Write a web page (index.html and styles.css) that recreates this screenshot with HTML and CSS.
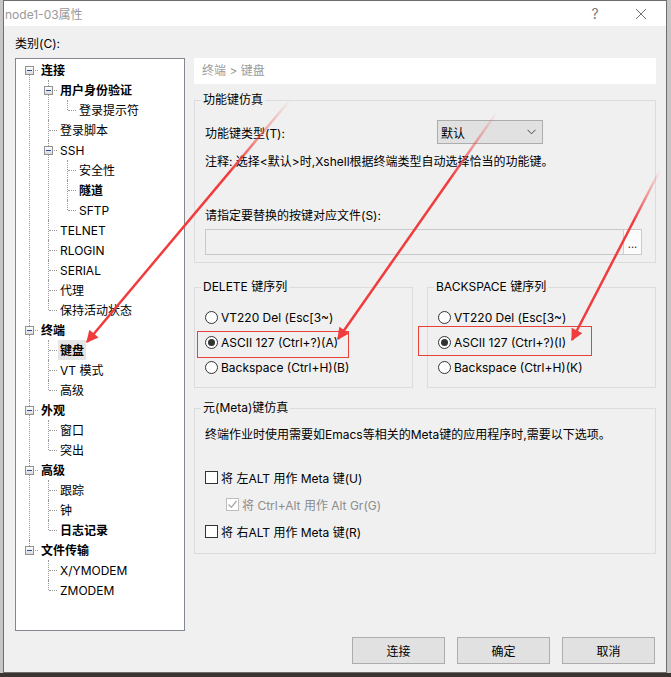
FILE: index.html
```html
<!DOCTYPE html>
<html lang="zh-CN">
<head>
    <meta charset="UTF-8">
    <meta name="viewport" content="width=device-width, initial-scale=1.0">
    <title>node1-03属性</title>
    <link rel="stylesheet" href="styles.css">
</head>
<body>
    <div class="window">
        <div class="titlebar">
            <span class="title">node1-03属性</span>
            <span class="tb-help">?</span>
            <span class="tb-close">
                <svg width="12" height="12" viewBox="0 0 12 12"><path d="M1 1 L11 11 M11 1 L1 11" stroke="#6f6f6f" stroke-width="1" fill="none"/></svg>
            </span>
        </div>

        <div class="content">
            <div class="cat-label">类别(C):</div>

            <!-- дерево категорий -->
            <div class="tree">
                <ul class="root">
                    <li class="first"><span class="exp"></span><span class="node b">连接</span>
                        <ul>
                            <li><span class="exp"></span><span class="node b">用户身份验证</span>
                                <ul>
                                    <li class="last"><span class="node">登录提示符</span></li>
                                </ul>
                            </li>
                            <li><span class="node">登录脚本</span></li>
                            <li><span class="exp"></span><span class="node">SSH</span>
                                <ul>
                                    <li><span class="node">安全性</span></li>
                                    <li><span class="node b">隧道</span></li>
                                    <li class="last"><span class="node">SFTP</span></li>
                                </ul>
                            </li>
                            <li><span class="node">TELNET</span></li>
                            <li><span class="node">RLOGIN</span></li>
                            <li><span class="node">SERIAL</span></li>
                            <li><span class="node">代理</span></li>
                            <li class="last"><span class="node">保持活动状态</span></li>
                        </ul>
                    </li>
                    <li><span class="exp"></span><span class="node b">终端</span>
                        <ul>
                            <li><span class="node b selected">键盘</span></li>
                            <li><span class="node">VT 模式</span></li>
                            <li class="last"><span class="node">高级</span></li>
                        </ul>
                    </li>
                    <li><span class="exp"></span><span class="node b">外观</span>
                        <ul>
                            <li><span class="node">窗口</span></li>
                            <li class="last"><span class="node">突出</span></li>
                        </ul>
                    </li>
                    <li><span class="exp"></span><span class="node b">高级</span>
                        <ul>
                            <li><span class="node">跟踪</span></li>
                            <li><span class="node">钟</span></li>
                            <li class="last"><span class="node b">日志记录</span></li>
                        </ul>
                    </li>
                    <li class="last"><span class="exp"></span><span class="node b">文件传输</span>
                        <ul>
                            <li><span class="node">X/YMODEM</span></li>
                            <li class="last"><span class="node">ZMODEM</span></li>
                        </ul>
                    </li>
                </ul>
            </div>

            <!-- правая панель -->
            <div class="panel">
                <div class="crumb">终端 &gt; 键盘</div>

                <fieldset class="group">
                    <legend>功能键仿真</legend>
                    <div class="group-body func-body">
                        <div class="field-row">
                            <span class="type-label">功能键类型(T):</span>
                            <div class="select">
                                <span>默认</span>
                                <svg width="9" height="6" viewBox="0 0 9 6"><path d="M0.5 0.8 L4.5 4.8 L8.5 0.8" stroke="#444" stroke-width="1" fill="none"/></svg>
                            </div>
                        </div>
                        <p class="note">注释: 选择&lt;默认&gt;时,Xshell根据终端类型自动选择恰当的功能键。</p>
                        <p class="file-label">请指定要替换的按键对应文件(S):</p>
                        <div class="file-input"><span class="browse">...</span></div>
                    </div>
                </fieldset>

                <div class="seq-row">
                    <fieldset class="group">
                        <legend>DELETE 键序列</legend>
                        <div class="group-body seq-body">
                            <div class="radio-row"><span class="radio"></span>VT220 Del (Esc[3~)</div>
                            <div class="radio-row"><span class="radio checked"></span>ASCII 127 (Ctrl+?)(A)</div>
                            <div class="radio-row"><span class="radio"></span>Backspace (Ctrl+H)(B)</div>
                        </div>
                    </fieldset>
                    <fieldset class="group">
                        <legend>BACKSPACE 键序列</legend>
                        <div class="group-body seq-body">
                            <div class="radio-row"><span class="radio"></span>VT220 Del (Esc[3~)</div>
                            <div class="radio-row"><span class="radio checked"></span>ASCII 127 (Ctrl+?)(I)</div>
                            <div class="radio-row"><span class="radio"></span>Backspace (Ctrl+H)(K)</div>
                        </div>
                    </fieldset>
                </div>

                <fieldset class="group">
                    <legend>元(Meta)键仿真</legend>
                    <div class="group-body meta-body">
                        <p class="meta-note">终端作业时使用需要如Emacs等相关的Meta键的应用程序时,需要以下选项。</p>
                        <div class="check-row first-check"><span class="check"></span>将 左ALT 用作 Meta 键(U)</div>
                        <div class="check-row sub disabled">
                            <span class="check">
                                <svg width="11" height="11" viewBox="0 0 11 11"><path d="M1.5 5.5 L4.3 8.3 L9.5 2" stroke="#a8a8a8" stroke-width="1.3" fill="none"/></svg>
                            </span>将 Ctrl+Alt 用作 Alt Gr(G)
                        </div>
                        <div class="check-row"><span class="check"></span>将 右ALT 用作 Meta 键(R)</div>
                    </div>
                </fieldset>
            </div>

            <div class="actions">
                <button>连接</button>
                <button>确定</button>
                <button>取消</button>
            </div>
        </div>
    </div>

    <!-- пометки поверх скриншота -->
    <svg class="marks" width="671" height="677" viewBox="0 0 671 677">
        <defs>
            <marker id="head" viewBox="0 0 10 10" refX="9" refY="5" markerWidth="15" markerHeight="12" markerUnits="userSpaceOnUse" orient="auto">
                <path d="M0 0 L10 5 L0 10 z" fill="#f03c3c"/>
            </marker>
            <linearGradient id="fade1" gradientUnits="userSpaceOnUse" x1="290" y1="100" x2="87" y2="342">
                <stop offset="0" stop-color="#f03c3c" stop-opacity="0"/>
                <stop offset="0.3" stop-color="#f03c3c" stop-opacity="1"/>
            </linearGradient>
            <linearGradient id="fade2" gradientUnits="userSpaceOnUse" x1="497" y1="112" x2="338" y2="339">
                <stop offset="0" stop-color="#f03c3c" stop-opacity="0"/>
                <stop offset="0.3" stop-color="#f03c3c" stop-opacity="1"/>
            </linearGradient>
            <linearGradient id="fade3" gradientUnits="userSpaceOnUse" x1="660" y1="170" x2="572" y2="340">
                <stop offset="0" stop-color="#f03c3c" stop-opacity="0"/>
                <stop offset="0.3" stop-color="#f03c3c" stop-opacity="1"/>
            </linearGradient>
        </defs>
        <line x1="290" y1="100" x2="87" y2="342" stroke="url(#fade1)" stroke-width="2.5" marker-end="url(#head)"/>
        <line x1="497" y1="112" x2="338" y2="339" stroke="url(#fade2)" stroke-width="2.5" marker-end="url(#head)"/>
        <line x1="660" y1="170" x2="572" y2="340" stroke="url(#fade3)" stroke-width="2.5" marker-end="url(#head)"/>
        <rect x="197.5" y="331.5" width="151" height="26" fill="none" stroke="#e8403a"/>
        <rect x="418.5" y="326.5" width="173" height="29" fill="none" stroke="#e8403a"/>
    </svg>
</body>
</html>
```

FILE: styles.css
```css
html, body {
    margin: 0;
    height: 677px;
    overflow: hidden;
}

body {
    position: relative;
    font-family: Inter, "Noto Sans CJK SC", sans-serif;
    font-size: 12px;
    color: #000;
    background: linear-gradient(to bottom, #c6c6c6 673px, #3b3430 673px);
}

.window {
    box-sizing: border-box;
    width: 664px;
    height: 673px;
    margin-left: 3px;
    border: 1px solid #6e6e6e;
    background-color: #f0f0f0;
    display: flex;
    flex-direction: column;
}

/* заголовок окна */
.titlebar {
    height: 25px;
    background-color: #fff;
    display: flex;
    align-items: center;
    padding-left: 1px;
    color: #999;
}

.title {
    flex: 1;
    font-size: 12px;
}

.tb-help {
    width: 20px;
    text-align: center;
    font-size: 14px;
    color: #7a7a7a;
    margin-right: 26px;
}

.tb-close {
    width: 20px;
    display: flex;
    justify-content: center;
    margin-right: 15px;
}

.content {
    flex: 1;
    display: grid;
    grid-template-columns: 170px 1fr;
    grid-template-rows: 16px 1fr 27px;
    column-gap: 9px;
    row-gap: 6px;
    padding: 10px 10px 8px 11px;
    min-height: 0;
}

.cat-label {
    line-height: 16px;
    grid-column: 1 / 3;
}

/* дерево */
.tree {
    border: 1px solid #828790;
    background-color: #fff;
    padding-top: 1px;
    overflow: hidden;
}

.tree ul {
    list-style: none;
    margin: 0;
    padding: 0;
}

.root {
    margin-left: 13px !important;
}

.tree ul ul {
    margin-left: 9px;
}

.tree li {
    position: relative;
    padding-left: 10px;
    line-height: 20px;
}

.tree li::before {
    content: "";
    position: absolute;
    left: 0;
    top: 0;
    bottom: 0;
    border-left: 1px dotted #9a9a9a;
}

.tree li.last::before {
    bottom: auto;
    height: 10px;
}

.root > li.first::before {
    top: 10px;
}

.tree li::after {
    content: "";
    position: absolute;
    left: 1px;
    top: 10px;
    width: 8px;
    border-top: 1px dotted #9a9a9a;
}

.node {
    display: inline-block;
    vertical-align: top;
    height: 19px;
    line-height: 19px;
    padding: 1px 2px 0;
    white-space: nowrap;
}

.b {
    font-weight: bold;
}

.selected {
    background-color: #e5e5e5;
}

.exp {
    position: absolute;
    z-index: 1;
    left: -4px;
    top: 6px;
    width: 7px;
    height: 7px;
    border: 1px solid #919191;
    background: linear-gradient(#ffffff, #dadada);
}

.exp::after {
    content: "";
    position: absolute;
    left: 1px;
    top: 3px;
    width: 5px;
    height: 1px;
    background-color: #2a4b9b;
}

/* правая панель */
.panel {
    display: flex;
    flex-direction: column;
}

.crumb {
    height: 26px;
    line-height: 26px;
    background-color: #fff;
    color: #9b9b9b;
    padding-left: 8px;
}

.group {
    margin: 0;
    padding: 0;
    border: 1px solid #dcdcdc;
    min-width: 0;
}

.group legend {
    margin-left: 6px;
    padding: 0 2px;
    line-height: 16px;
}

.panel > .group:first-of-type {
    margin-top: 8px;
}

.group-body {
    padding: 0 13px 7px 10px;
}

.func-body {
    padding-top: 12px;
}

.field-row {
    display: flex;
    align-items: center;
    height: 24px;
}

.type-label {
    width: 232px;
}

.select {
    box-sizing: border-box;
    width: 106px;
    height: 24px;
    border: 1px solid #adadad;
    background-color: #e1e1e1;
    display: flex;
    align-items: center;
    justify-content: space-between;
    padding: 0 6px 0 3px;
}

.note, .file-label, .meta-note {
    margin: 0;
    line-height: 16px;
}

.note {
    margin-top: 10px;
}

.file-label {
    margin-top: 38px;
}

.file-input {
    box-sizing: border-box;
    margin-top: 5px;
    height: 26px;
    border: 1px solid #c9c9c9;
    background-color: #f0f0f0;
    display: flex;
    justify-content: flex-end;
}

.browse {
    width: 17px;
    border-left: 1px solid #d0d0d0;
    background-color: #fbfbfb;
    text-align: center;
    line-height: 28px;
    font-size: 11px;
    color: #333;
}

.seq-row {
    display: grid;
    grid-template-columns: 219px 1fr;
    column-gap: 14px;
    margin-top: 16px;
}

.seq-body {
    padding-top: 10px;
}

.radio-row {
    height: 25px;
    display: flex;
    align-items: center;
    white-space: nowrap;
}

.radio {
    box-sizing: border-box;
    width: 13px;
    height: 13px;
    border: 1px solid #333;
    border-radius: 50%;
    background-color: #fff;
    margin-right: 3px;
    display: flex;
    align-items: center;
    justify-content: center;
}

.radio.checked::after {
    content: "";
    width: 7px;
    height: 7px;
    border-radius: 50%;
    background-color: #333;
}

.seq-row + .group {
    margin-top: 12px;
}

.meta-body {
    padding-top: 11px;
    padding-bottom: 8px;
}

.check-row {
    height: 27px;
    display: flex;
    align-items: center;
}

.first-check {
    margin-top: 21px;
}

.check-row.sub {
    padding-left: 21px;
}

.check {
    box-sizing: border-box;
    width: 13px;
    height: 13px;
    border: 1px solid #333;
    background-color: #fff;
    margin-right: 3px;
    display: flex;
    align-items: center;
    justify-content: center;
}

.disabled {
    color: #8c8c8c;
}

.disabled .check {
    border-color: #bcbcbc;
}

/* кнопки */
.actions {
    grid-column: 1 / 3;
    display: flex;
    justify-content: flex-end;
    gap: 12px;
    padding-right: 1px;
}

button {
    width: 93px;
    height: 27px;
    border: 1px solid #adadad;
    background-color: #e1e1e1;
    font-family: inherit;
    font-size: 12px;
    color: #000;
    padding: 0;
}

.marks {
    position: absolute;
    left: 0;
    top: 0;
    pointer-events: none;
}
```
